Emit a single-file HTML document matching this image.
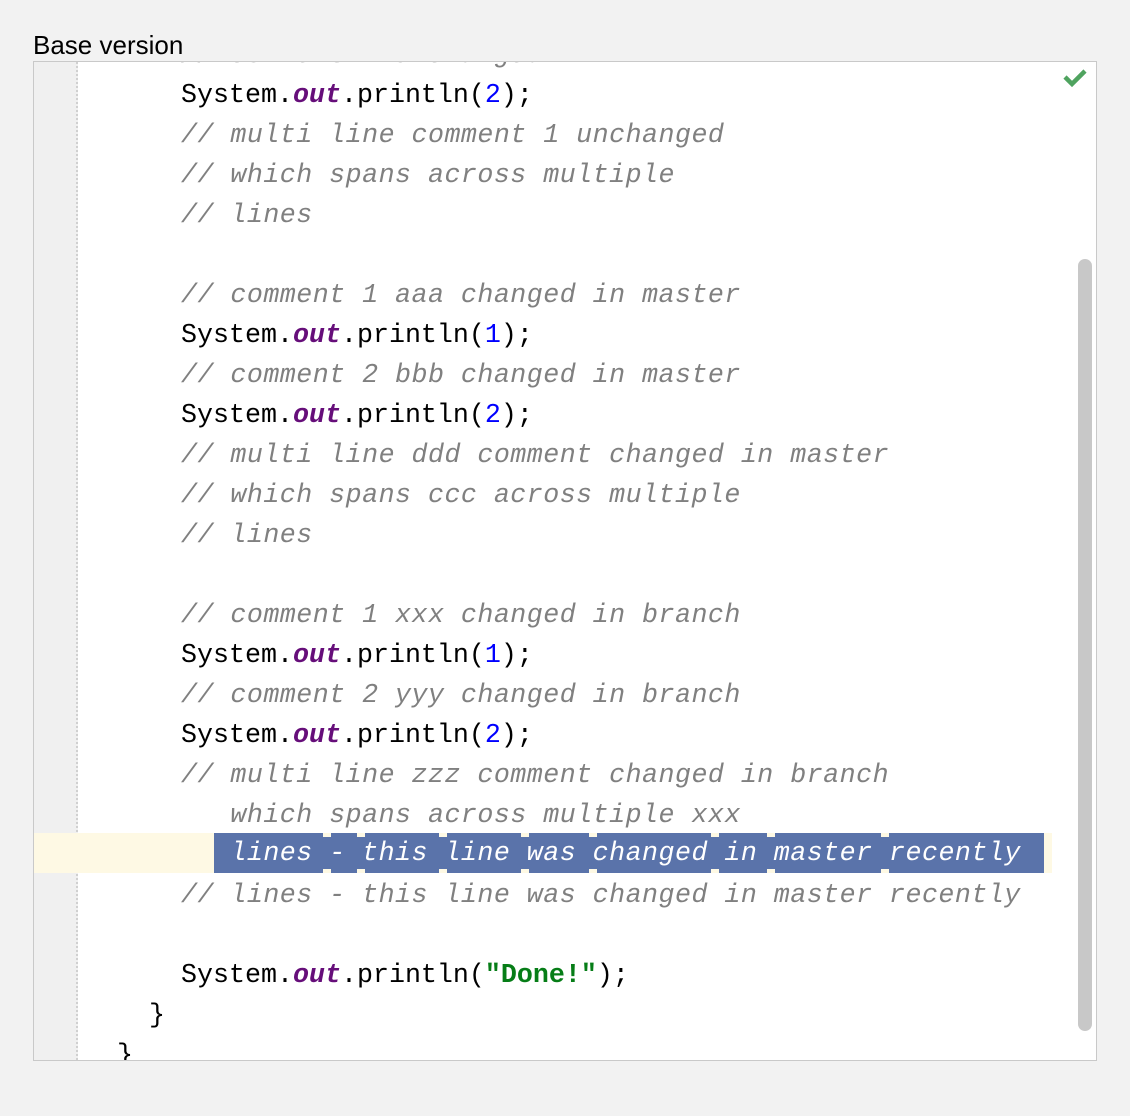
<!DOCTYPE html>
<html><head><style>
body{margin:0;width:1130px;height:1116px;background:#f2f2f2;position:relative;overflow:hidden;font-family:"Liberation Sans",sans-serif}
.title{position:absolute;left:33px;top:30px;font-size:26px;color:#000;line-height:30px}
.panel{position:absolute;left:33px;top:61px;width:1062px;height:998px;border:1px solid #c9c9c9;background:#fff;overflow:hidden}
.gutter{position:absolute;left:0;top:0;width:42px;height:100%;background:#f0f0f0;border-right:2px dotted #d0d0d0}
.hl{position:absolute;left:0;top:771px;width:1018px;height:40px;background:#fef9e4}
.bar{position:absolute;left:180px;top:771px;width:830px;height:40px;background:#5a73aa}
.n{position:absolute;width:8px;height:4px;background:#fef9e4}
.ln{position:absolute;left:51px;height:40px;line-height:40px;white-space:pre;font-family:"Liberation Mono",monospace;font-size:26.67px;color:#000;margin-top:3px}
.c{color:#808080;font-style:italic;letter-spacing:0.47px}
.o{color:#660e7a;font-weight:bold;font-style:italic}
.d{color:#0000ff}
.s{color:#067d17;font-weight:bold}
.w{color:#fff;font-style:italic;letter-spacing:0.47px}
.sb{position:absolute;left:1044px;top:197px;width:14px;height:772px;background:#c8c8c8;border-radius:7px}
</style></head><body>
<div class="title">Base version</div>
<div class="panel">
<div class="gutter"></div>
<div class="hl"></div>
<div class="bar"></div>
<div class="n" style="left:289px;top:771px"></div><div class="n" style="left:289px;top:807px"></div>
<div class="n" style="left:323px;top:771px"></div><div class="n" style="left:323px;top:807px"></div>
<div class="n" style="left:405px;top:771px"></div><div class="n" style="left:405px;top:807px"></div>
<div class="n" style="left:487px;top:771px"></div><div class="n" style="left:487px;top:807px"></div>
<div class="n" style="left:555px;top:771px"></div><div class="n" style="left:555px;top:807px"></div>
<div class="n" style="left:677px;top:771px"></div><div class="n" style="left:677px;top:807px"></div>
<div class="n" style="left:733px;top:771px"></div><div class="n" style="left:733px;top:807px"></div>
<div class="n" style="left:847px;top:771px"></div><div class="n" style="left:847px;top:807px"></div>
<div class="ln" style="top:-29px">      <span class="c">// comment 2 unchanged</span></div>
<div class="ln" style="top:11px">      System.<span class="o">out</span>.println(<span class="d">2</span>);</div>
<div class="ln" style="top:51px">      <span class="c">// multi line comment 1 unchanged</span></div>
<div class="ln" style="top:91px">      <span class="c">// which spans across multiple</span></div>
<div class="ln" style="top:131px">      <span class="c">// lines</span></div>
<div class="ln" style="top:211px">      <span class="c">// comment 1 aaa changed in master</span></div>
<div class="ln" style="top:251px">      System.<span class="o">out</span>.println(<span class="d">1</span>);</div>
<div class="ln" style="top:291px">      <span class="c">// comment 2 bbb changed in master</span></div>
<div class="ln" style="top:331px">      System.<span class="o">out</span>.println(<span class="d">2</span>);</div>
<div class="ln" style="top:371px">      <span class="c">// multi line ddd comment changed in master</span></div>
<div class="ln" style="top:411px">      <span class="c">// which spans ccc across multiple</span></div>
<div class="ln" style="top:451px">      <span class="c">// lines</span></div>
<div class="ln" style="top:531px">      <span class="c">// comment 1 xxx changed in branch</span></div>
<div class="ln" style="top:571px">      System.<span class="o">out</span>.println(<span class="d">1</span>);</div>
<div class="ln" style="top:611px">      <span class="c">// comment 2 yyy changed in branch</span></div>
<div class="ln" style="top:651px">      System.<span class="o">out</span>.println(<span class="d">2</span>);</div>
<div class="ln" style="top:691px">      <span class="c">// multi line zzz comment changed in branch</span></div>
<div class="ln" style="top:731px;left:147px"><span class="c">   which spans across multiple xxx</span></div>
<div class="ln" style="top:771px;left:147px;margin-top:1px"><span class="w">   lines - this line was changed in master recently</span></div>
<div class="ln" style="top:811px">      <span class="c">// lines - this line was changed in master recently</span></div>
<div class="ln" style="top:891px">      System.<span class="o">out</span>.println(<span class="s">"Done!"</span>);</div>
<div class="ln" style="top:931px">    }</div>
<div class="ln" style="top:971px">  }</div>
<div class="sb"></div>
<svg style="position:absolute;left:1028px;top:4px" width="26" height="22" viewBox="0 0 26 22"><path d="M3 11 L10 18 L23 5" fill="none" stroke="#4fa35f" stroke-width="4.5"/></svg>
</div>
</body></html>
